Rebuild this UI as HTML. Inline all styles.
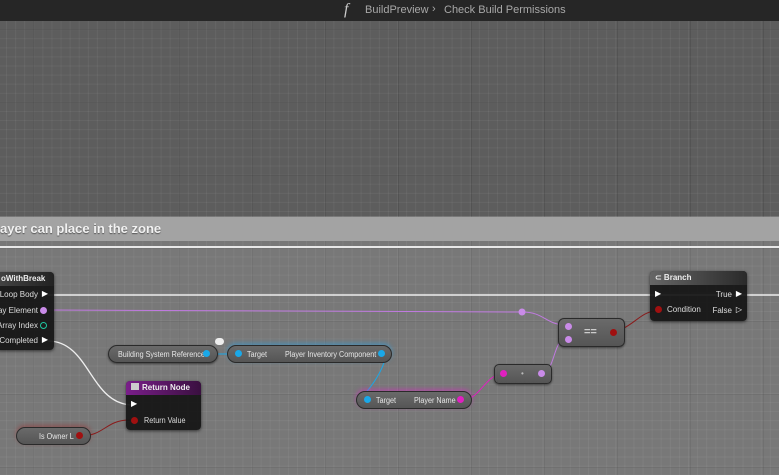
<!DOCTYPE html>
<html><head><style>
*{margin:0;padding:0;box-sizing:border-box}
body{width:779px;height:475px;overflow:hidden;background:#5d5d5d;font-family:"Liberation Sans",sans-serif;position:relative}
.grid{position:absolute;left:0;top:21px;width:779px;height:454px;
background-image:linear-gradient(90deg,rgba(40,40,40,.18) 1px,transparent 1px),linear-gradient(0deg,rgba(40,40,40,.18) 1px,transparent 1px),linear-gradient(90deg,rgba(255,255,255,.05) 1px,transparent 1px),linear-gradient(0deg,rgba(255,255,255,.05) 1px,transparent 1px);
background-size:73px 73px,73px 73px,9.1px 9.1px,9.1px 9.1px;background-position:33px 9px,33px 9px,6px 0,6px 0}
.top{position:absolute;left:0;top:0;width:779px;height:21px;background:#262626;color:#a8a8a8;font-size:11px}
.cmt{position:absolute;left:0;top:216px;width:779px;height:259px;background:rgba(255,255,255,.17)}
.cmth{position:absolute;left:0;top:217px;width:779px;height:24px;background:#a3a3a3;color:#f2f2f2;font-weight:bold;font-size:13px;padding:4px 0 0 0;text-shadow:0 1px 1px #555}
.node{position:absolute;background:rgba(20,20,20,.93);border-radius:4px;box-shadow:0 1px 3px rgba(0,0,0,.6);color:#ddd;font-size:8px}
.hdr{height:14px;border-radius:4px 4px 0 0;font-weight:bold;color:#eee;padding:2px 0 0 5px;font-size:8px}
.pill{position:absolute;background:linear-gradient(#6a6a6a,#555);border:1px solid #2a2a2a;border-radius:9px;color:#e6e6e6;font-size:8px;height:18px;box-shadow:0 1px 2px rgba(0,0,0,.5)}
.t{position:absolute;white-space:nowrap}
.n{transform:scaleX(.9);transform-origin:left}
</style></head><body>
<div class="grid"></div>
<div class="cmt"></div>
<div class="cmth">ayer can place in the zone</div>
<div style="position:absolute;left:0;top:246px;width:779px;height:2px;background:#e8e8e8"></div>
<div class="top"><span class="t" style="left:344px;top:1px;font-family:'Liberation Serif',serif;font-style:italic;font-size:16px;color:#ccc">f</span><span class="t" style="left:365px;top:4px">BuildPreview</span><span class="t" style="left:432px;top:3px">›</span><span class="t" style="left:444px;top:4px">Check Build Permissions</span></div>

<svg style="position:absolute;left:0;top:0" width="779" height="475">
<path d="M48 295 H779" stroke="#eee" stroke-width="1.5" fill="none"/>
<path d="M48 310 C300 311 480 312 522 312 C545 312 545 325 567 325" stroke="#c07ae0" stroke-width="1" fill="none"/>
<circle cx="522" cy="312" r="3.5" fill="#c98be8"/>
<path d="M48 341 C90 341 90 405 133 405" stroke="#eee" stroke-width="1.3" fill="none"/>
<path d="M80 436 C105 436 105 420 130 420" stroke="#8a1b1b" stroke-width="1" fill="none"/>
<path d="M205 354 H235" stroke="#1aa8e8" stroke-width="1" fill="none"/>
<path d="M381 354 C395 354 365 400 356 400" stroke="#1aa8e8" stroke-width="1" fill="none"/>
<path d="M462 400 C480 400 485 375 502 374" stroke="#e020c0" stroke-width="1" fill="none"/>
<path d="M541 373 C556 373 552 339 567 338" stroke="#c07ae0" stroke-width="1" fill="none"/>
<path d="M612 331 C630 331 640 311 656 311" stroke="#8a1b1b" stroke-width="1" fill="none"/>
</svg>

<div class="node" style="left:-4px;top:272px;width:58px;height:78px">
<div class="hdr" style="background:linear-gradient(90deg,#444,#222)">oWithBreak</div>
<span class="t" style="right:16px;top:18px">Loop Body</span><span class="t" style="right:6px;top:17px;color:#fff">▶</span>
<span class="t" style="right:16px;top:34px">rray Element</span><span class="t" style="right:7px;top:35px;width:7px;height:7px;border-radius:50%;background:#c98be8"></span>
<span class="t" style="right:16px;top:49px">Array Index</span><span class="t" style="right:7px;top:50px;width:7px;height:7px;border-radius:50%;border:1.5px solid #1fc7a0"></span>
<span class="t" style="right:16px;top:64px">Completed</span><span class="t" style="right:6px;top:63px;color:#fff">▶</span>
</div>

<div class="pill" style="left:108px;top:345px;width:110px"><span class="t n" style="left:9px;top:4px">Building System Reference</span><span class="t" style="left:94px;top:4px;width:7px;height:7px;border-radius:50%;background:#1aa8e8"></span></div>
<div style="position:absolute;left:215px;top:338px;width:9px;height:7px;border-radius:4px;background:#eee"></div>
<div class="pill" style="left:227px;top:345px;width:165px;box-shadow:0 -2px 5px rgba(40,160,230,.5)"><span class="t" style="left:7px;top:4px;width:7px;height:7px;border-radius:50%;background:#1aa8e8"></span><span class="t n" style="left:19px;top:4px">Target</span><span class="t n" style="left:57px;top:4px">Player Inventory Component</span><span class="t" style="left:150px;top:4px;width:7px;height:7px;border-radius:50%;background:#1aa8e8"></span></div>

<div class="node" style="left:126px;top:381px;width:75px;height:49px">
<div class="hdr" style="background:linear-gradient(90deg,#7a1e8a,#3a1040)"><span style="display:inline-block;width:8px;height:7px;background:#ccc;margin-right:3px"></span>Return Node</div>
<span class="t" style="left:5px;top:18px;color:#fff">▶</span>
<span class="t" style="left:5px;top:36px;width:7px;height:7px;border-radius:50%;background:#a01010"></span><span class="t n" style="left:18px;top:35px">Return Value</span>
</div>

<div class="pill" style="left:16px;top:427px;width:75px;box-shadow:0 -2px 5px rgba(160,30,30,.4)"><span class="t n" style="left:22px;top:4px">Is Owner L</span><span class="t" style="left:59px;top:4px;width:7px;height:7px;border-radius:50%;background:#a01010"></span></div>

<div class="pill" style="left:356px;top:391px;width:116px;box-shadow:0 -2px 5px rgba(220,40,200,.5)"><span class="t" style="left:7px;top:4px;width:7px;height:7px;border-radius:50%;background:#1aa8e8"></span><span class="t n" style="left:19px;top:4px">Target</span><span class="t n" style="left:57px;top:4px">Player Name</span><span class="t" style="left:100px;top:4px;width:7px;height:7px;border-radius:50%;background:#e020c0"></span></div>

<div class="pill" style="left:494px;top:364px;width:58px;height:20px;border-radius:5px"><span class="t" style="left:5px;top:5px;width:7px;height:7px;border-radius:50%;background:#e020c0"></span><span class="t" style="left:26px;top:4px;color:#bbb">•</span><span class="t" style="left:43px;top:5px;width:7px;height:7px;border-radius:50%;background:#c98be8"></span></div>

<div class="pill" style="left:558px;top:318px;width:67px;height:29px;border-radius:6px"><span class="t" style="left:6px;top:4px;width:7px;height:7px;border-radius:50%;background:#c98be8"></span><span class="t" style="left:6px;top:17px;width:7px;height:7px;border-radius:50%;background:#c98be8"></span><span class="t" style="left:25px;top:7px;color:#ccc;font-size:11px;font-weight:bold">==</span><span class="t" style="left:51px;top:10px;width:7px;height:7px;border-radius:50%;background:#a01010"></span></div>

<div class="node" style="left:650px;top:271px;width:97px;height:50px">
<div class="hdr" style="background:linear-gradient(90deg,#666,#2a2a2a)">⊂ Branch</div>
<span class="t" style="left:5px;top:18px;color:#fff">▶</span>
<span class="t" style="right:15px;top:19px">True</span><span class="t" style="right:5px;top:18px;color:#fff">▶</span>
<span class="t" style="left:5px;top:35px;width:7px;height:7px;border-radius:50%;background:#a01010"></span><span class="t" style="left:17px;top:34px">Condition</span>
<span class="t" style="right:15px;top:35px">False</span><span class="t" style="right:5px;top:34px;color:#fff">▷</span>
</div>
</body></html>
